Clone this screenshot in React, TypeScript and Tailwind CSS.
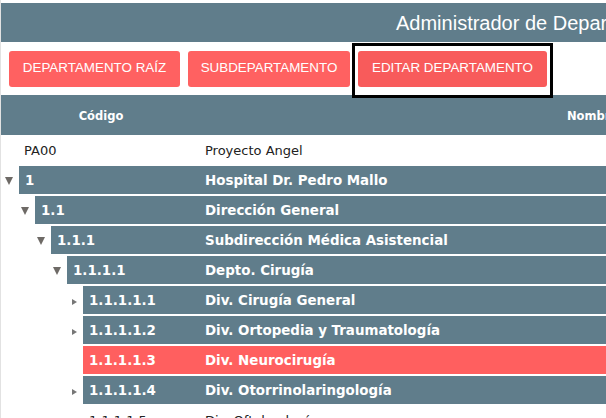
import React from "react";

type Row = {
  level: number;
  code: string;
  name: string;
  toggle: "open" | "closed" | "none";
  variant: "bar" | "selected" | "plain";
};

const rows: Row[] = [
  { level: 1, code: "1", name: "Hospital Dr. Pedro Mallo", toggle: "open", variant: "bar" },
  { level: 2, code: "1.1", name: "Dirección General", toggle: "open", variant: "bar" },
  { level: 3, code: "1.1.1", name: "Subdirección Médica Asistencial", toggle: "open", variant: "bar" },
  { level: 4, code: "1.1.1.1", name: "Depto. Cirugía", toggle: "open", variant: "bar" },
  { level: 5, code: "1.1.1.1.1", name: "Div. Cirugía General", toggle: "closed", variant: "bar" },
  { level: 5, code: "1.1.1.1.2", name: "Div. Ortopedia y Traumatología", toggle: "closed", variant: "bar" },
  { level: 5, code: "1.1.1.1.3", name: "Div. Neurocirugía", toggle: "none", variant: "selected" },
  { level: 5, code: "1.1.1.1.4", name: "Div. Otorrinolaringología", toggle: "closed", variant: "bar" },
  { level: 5, code: "1.1.1.1.5", name: "Div. Oftalmología", toggle: "none", variant: "plain" },
];

const indentClass: Record<number, string> = {
  1: "w-[4px]",
  2: "w-[20px]",
  3: "w-[36px]",
  4: "w-[52px]",
  5: "w-[68px]",
};

function Toggle({ kind }: { kind: Row["toggle"] }) {
  return (
    <div className="w-[8px] flex items-center justify-center shrink-0">
      {kind === "open" && (
        <svg width="8" height="8" viewBox="0 0 8 8" className="mt-[2px]">
          <polygon points="0,0 8,0 4,8" fill="#6e6a66" />
        </svg>
      )}
      {kind === "closed" && (
        <svg width="5" height="6" viewBox="0 0 5 6" className="ml-[3px] mt-[3px]">
          <polygon points="0,0 5,3 0,6" fill="#777" />
        </svg>
      )}
    </div>
  );
}

function TreeRow({ row }: { row: Row }) {
  const bg =
    row.variant === "bar"
      ? "bg-[#607d8b] text-white font-bold"
      : row.variant === "selected"
      ? "bg-[#ff5f5f] text-white font-bold"
      : "bg-transparent text-[#222] font-normal";
  const size = row.variant === "plain" ? "text-[13px]" : "text-[13.4px]";
  return (
    <div className="flex h-[28px]">
      <div className="w-[200px] flex shrink-0">
        <div className={`${indentClass[row.level]} shrink-0`} />
        <Toggle kind={row.toggle} />
        <div className="w-[6px] shrink-0" />
        <div className={`flex-1 flex items-center pl-[6px] pt-[2px] ${bg} ${size}`}>{row.code}</div>
      </div>
      <div className={`flex-1 flex items-center pl-[4px] pt-[2px] ${bg} ${size}`}>{row.name}</div>
    </div>
  );
}

export default function App() {
  return (
    <div className="w-full h-[418px] overflow-hidden bg-white border-l border-[#e2e2e2]">
      <div className="w-[983px]">
        {/* Title bar */}
        <div
          className="mt-[3px] h-[39px] bg-[#607d8b] flex items-center pl-[395px] pt-[1px] text-white text-[20px] whitespace-nowrap"
          style={{ fontFamily: '"Liberation Sans", Arial, sans-serif' }}
        >
          Administrador de Departamentos
        </div>

        {/* Buttons */}
        <div
          className="h-[53px] flex items-center gap-[8px] pl-[8px] text-white text-[13.4px]"
          style={{ fontFamily: '"Liberation Sans", Arial, sans-serif' }}
        >
          <button className="w-[171px] h-[36px] rounded-[3px] bg-[#ff6161] flex items-center justify-center whitespace-nowrap">
            DEPARTAMENTO RAÍZ
          </button>
          <button className="w-[162px] h-[36px] rounded-[3px] bg-[#ff6161] flex items-center justify-center whitespace-nowrap">
            SUBDEPARTAMENTO
          </button>
          <button className="relative w-[189px] h-[36px] rounded-[3px] bg-[#f85b5b] flex items-center justify-center whitespace-nowrap">
            EDITAR DEPARTAMENTO
            <span className="absolute top-[-8px] bottom-[-11px] left-[-6px] right-[-6px] border-[3px] border-black z-10 pointer-events-none" />
          </button>
        </div>

        {/* Table */}
        <div style={{ fontFamily: '"DejaVu Sans", Verdana, sans-serif' }}>
          <div className="h-[40px] bg-[#607d8b] flex items-center pt-[3px] text-white font-bold text-[11.5px]">
            <div className="w-[200px] text-center shrink-0">Código</div>
            <div className="flex-1 text-center">Nombre</div>
          </div>
          <div className="flex flex-col gap-[2px] pt-[1px]">
            <div className="flex h-[28px] text-[13px] text-[#222]">
              <div className="w-[200px] flex items-center pl-[23px] pt-[2px] shrink-0">PA00</div>
              <div className="flex-1 flex items-center pl-[4px] pt-[2px]">Proyecto Angel</div>
            </div>
            {rows.map((r) => (
              <TreeRow key={r.code} row={r} />
            ))}
          </div>
        </div>
      </div>
    </div>
  );
}
